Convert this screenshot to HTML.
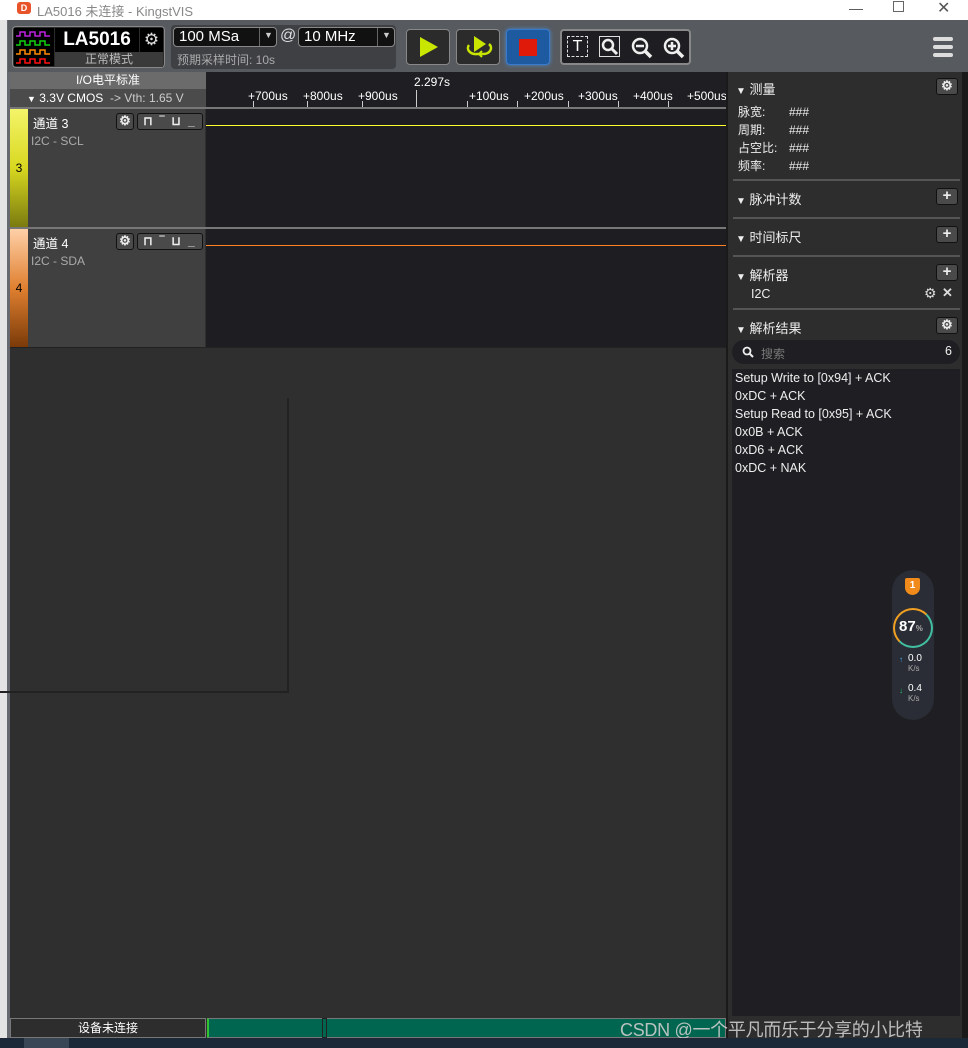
<!DOCTYPE html>
<html><head><meta charset="utf-8">
<style>
*{box-sizing:border-box;margin:0;padding:0}
body{width:968px;height:1048px;position:relative;overflow:hidden;background:#2f2f2f;font-family:"Liberation Sans","Noto Sans CJK SC",sans-serif;font-size:12px;color:#ddd}
.a{position:absolute}
.btn{position:absolute;border:1px solid #888;border-radius:4px;background:#2b2b2b}
.sbtn{position:absolute;width:22px;height:17px;border:1px solid #111;border-radius:3px;background:#4a4a4a;color:#eee;font-size:15px;line-height:14px;text-align:center;font-weight:bold}
.hdr{position:absolute;left:736px;color:#eee;font-size:13px}
.sep{position:absolute;left:733px;width:227px;height:2px;background:#555}
.res{position:absolute;left:735px;color:#eee;font-size:12.5px}
.tick{position:absolute;top:89px;color:#fff;font-size:12px}
.tk{position:absolute;top:101px;width:1px;height:6px;background:#ccc}
</style></head><body>
<div class="a" style="left:0;top:0;width:968px;height:20px;background:#fff"></div>
<div class="a" style="left:17px;top:2px;width:14px;height:12px;border-radius:3px;background:#e8532a;color:#fff;font-size:9px;font-weight:bold;text-align:center;line-height:12px">D</div>
<div class="a" style="left:37px;top:1px;color:#888;font-size:13px">LA5016 未连接 - KingstVIS</div>
<div class="a" style="left:849px;top:0px;color:#555;font-size:14px">—</div>
<div class="a" style="left:893px;top:1px;width:11px;height:11px;border:1px solid #666"></div>
<div class="a" style="left:937px;top:-2px;color:#555;font-size:16px">✕</div>
<div class="a" style="left:0;top:20px;width:8px;height:1018px;background:#e4e4e4"></div>
<div class="a" style="left:7px;top:20px;width:3px;height:1018px;background:#666a70"></div>
<div class="a" style="left:8px;top:20px;width:960px;height:52px;background:#575a5f"></div>
<div class="btn" style="left:12px;top:26px;width:153px;height:42px;background:#2b2b2b"></div>
<div class="a" style="left:14px;top:28px;width:40px;height:38px;background:#000"></div>
<svg class="a" style="left:14px;top:28px" width="40" height="38"><g fill="none" stroke-width="1.5">
<path d="M2 8h4v-4h5v4h5v-4h5v4h5v-4h5v4h5" stroke="#c020e0"/>
<path d="M2 17h4v-4h5v4h5v-4h5v4h5v-4h5v4h5" stroke="#10d010"/>
<path d="M2 26h4v-4h5v4h5v-4h5v4h5v-4h5v4h5" stroke="#ff8c00"/>
<path d="M2 35h4v-4h5v4h5v-4h5v4h5v-4h5v4h5" stroke="#ff1010"/></g></svg>
<div class="a" style="left:55px;top:28px;width:84px;height:24px;background:#000;color:#fff;font-size:19px;font-weight:bold;text-align:center;line-height:24px">LA5016</div>
<div class="a" style="left:140px;top:28px;width:23px;height:24px;background:#000;color:#ddd;font-size:17px;text-align:center;line-height:24px">⚙</div>
<div class="a" style="left:55px;top:52px;width:108px;height:15px;background:#3a3a3a;color:#bbb;font-size:12px;text-align:center;line-height:15px">正常模式</div>
<div class="a" style="left:171px;top:25px;width:225px;height:44px;background:#3e4044;border-radius:4px"></div>
<div class="btn" style="left:173px;top:27px;width:104px;height:20px;background:#111;color:#fff;font-size:15px;line-height:18px;padding-left:5px">100 MSa</div>
<div class="a" style="left:259px;top:28px;width:1px;height:18px;background:#666"></div>
<div class="a" style="left:264px;top:30px;color:#ccc;font-size:9px">▼</div>
<div class="a" style="left:280px;top:27px;color:#ddd;font-size:16px">@</div>
<div class="btn" style="left:298px;top:27px;width:97px;height:20px;background:#111;color:#fff;font-size:15px;line-height:18px;padding-left:5px">10 MHz</div>
<div class="a" style="left:377px;top:28px;width:1px;height:18px;background:#666"></div>
<div class="a" style="left:382px;top:30px;color:#ccc;font-size:9px">▼</div>
<div class="a" style="left:177px;top:51px;color:#aaa;font-size:12px">预期采样时间: 10s</div>
<div class="btn" style="left:406px;top:29px;width:44px;height:36px;background:#2b2b2b"></div>
<svg class="a" style="left:418px;top:36px" width="22" height="22"><path d="M2 1L20 11L2 21Z" fill="#c8e600"/></svg>
<div class="btn" style="left:456px;top:29px;width:44px;height:36px"></div>
<svg class="a" style="left:460px;top:32px" width="36" height="30"><path d="M14 4L26 12L14 20Z" fill="#c8e600"/><path d="M9 13a8 6 0 0 0 8 9h6a8 6 0 0 0 6-10" fill="none" stroke="#c8e600" stroke-width="2.5"/><path d="M22 19l-3 3 3 3" fill="none" stroke="#c8e600" stroke-width="2"/></svg>
<div class="btn" style="left:506px;top:29px;width:44px;height:36px;background:#1e5aa0;border-color:#3a7acc;box-shadow:0 0 4px #4a8ad0"></div>
<div class="a" style="left:519px;top:39px;width:18px;height:17px;background:#e01a0a"></div>
<div class="btn" style="left:560px;top:29px;width:131px;height:36px;background:#1e1e22;border-width:2px"></div>
<div class="a" style="left:567px;top:36px;width:21px;height:21px;border:1px dashed #ddd;color:#fff;font-size:16px;text-align:center;line-height:19px">T</div>
<div class="a" style="left:599px;top:36px;width:21px;height:21px;border:1px solid #ddd"></div>
<svg class="a" style="left:599px;top:36px" width="21" height="21"><circle cx="9" cy="9" r="5" fill="none" stroke="#eee" stroke-width="2.5"/><path d="M12 12l6 6" stroke="#eee" stroke-width="3"/></svg>
<svg class="a" style="left:630px;top:36px" width="24" height="24"><circle cx="10" cy="10" r="7" fill="none" stroke="#eee" stroke-width="2.5"/><path d="M6 10h8" stroke="#eee" stroke-width="2.5"/><path d="M15 15l6 6" stroke="#eee" stroke-width="3.5"/></svg>
<svg class="a" style="left:662px;top:36px" width="24" height="24"><circle cx="10" cy="10" r="7" fill="none" stroke="#eee" stroke-width="2.5"/><path d="M6 10h8M10 6v8" stroke="#eee" stroke-width="2.5"/><path d="M15 15l6 6" stroke="#eee" stroke-width="3.5"/></svg>
<div class="a" style="left:933px;top:37px;width:20px;height:4px;border-radius:2px;background:#ddd"></div>
<div class="a" style="left:933px;top:45px;width:20px;height:4px;border-radius:2px;background:#ddd"></div>
<div class="a" style="left:933px;top:53px;width:20px;height:4px;border-radius:2px;background:#ddd"></div>
<div class="a" style="left:10px;top:72px;width:716px;height:36px;background:#1f1f23"></div>
<div class="a" style="left:10px;top:72px;width:196px;height:17px;background:#6b6b6b;color:#fff;text-align:center;font-size:12px;line-height:17px">I/O电平标准</div>
<div class="a" style="left:10px;top:89px;width:196px;height:18px;background:#4b4b4b;color:#fff;font-size:12px;line-height:18px;padding-left:17px"><span style="font-size:9px">▼</span> 3.3V CMOS <span style="color:#ccc">&nbsp;-&gt; Vth: 1.65 V</span></div>
<div class="a" style="left:414px;top:75px;color:#fff;font-size:12px">2.297s</div>
<div class="a" style="left:416px;top:90px;width:1px;height:17px;background:#ccc"></div>
<div class="tick" style="left:248px">+700us</div><div class="tk" style="left:253px"></div>
<div class="tick" style="left:303px">+800us</div><div class="tk" style="left:307px"></div>
<div class="tick" style="left:358px">+900us</div><div class="tk" style="left:362px"></div>
<div class="tick" style="left:469px">+100us</div><div class="tk" style="left:467px"></div>
<div class="tick" style="left:524px">+200us</div><div class="tk" style="left:517px"></div>
<div class="tick" style="left:578px">+300us</div><div class="tk" style="left:568px"></div>
<div class="tick" style="left:633px">+400us</div><div class="tk" style="left:618px"></div>
<div class="tick" style="left:687px">+500us</div><div class="tk" style="left:668px"></div>
<div class="a" style="left:10px;top:107px;width:716px;height:2px;background:#777"></div>
<div class="a" style="left:10px;top:109px;width:18px;height:118px;background:linear-gradient(#f4f46a,#d8d820 50%,#7a7a10);color:#000;font-size:12px;text-align:center;line-height:118px">3</div>
<div class="a" style="left:28px;top:109px;width:177px;height:118px;background:#404040"></div>
<div class="a" style="left:206px;top:109px;width:520px;height:118px;background:#1e1e22"></div>
<div class="a" style="left:206px;top:125px;width:520px;height:1px;background:#ffff30"></div>
<div class="a" style="left:33px;top:113px;color:#fff;font-size:12.5px">通道 3</div>
<div class="a" style="left:31px;top:134px;color:#aaa;font-size:12px">I2C - SCL</div>
<div class="sbtn" style="left:116px;top:113px;width:18px;font-size:13px">⚙</div>
<div class="sbtn" style="left:137px;top:113px;width:66px;font-size:12px;letter-spacing:2px;line-height:15px">⊓ ‾ ⊔ _</div>
<div class="a" style="left:10px;top:227px;width:716px;height:2px;background:#777"></div>
<div class="a" style="left:10px;top:229px;width:18px;height:118px;background:linear-gradient(#ffd0a8,#e08030 50%,#7a3a08);color:#000;font-size:12px;text-align:center;line-height:118px">4</div>
<div class="a" style="left:28px;top:229px;width:177px;height:118px;background:#404040"></div>
<div class="a" style="left:206px;top:229px;width:520px;height:118px;background:#1e1e22"></div>
<div class="a" style="left:206px;top:245px;width:520px;height:1px;background:#ff8020"></div>
<div class="a" style="left:33px;top:233px;color:#fff;font-size:12.5px">通道 4</div>
<div class="a" style="left:31px;top:254px;color:#aaa;font-size:12px">I2C - SDA</div>
<div class="sbtn" style="left:116px;top:233px;width:18px;font-size:13px">⚙</div>
<div class="sbtn" style="left:137px;top:233px;width:66px;font-size:12px;letter-spacing:2px;line-height:15px">⊓ ‾ ⊔ _</div>
<div class="a" style="left:10px;top:347px;width:716px;height:1px;background:#222"></div>
<div class="a" style="left:287px;top:398px;width:2px;height:294px;background:#222"></div>
<div class="a" style="left:0;top:691px;width:289px;height:2px;background:#222"></div>
<div class="a" style="left:726px;top:72px;width:242px;height:966px;background:#2d2d2d;border-left:2px solid #1a1a1a;border-right:6px solid #1a1a1a"></div>
<div class="hdr" style="top:79px"><span style="font-size:10px">▼</span> 测量</div>
<div class="sbtn" style="left:936px;top:78px;font-size:13px">⚙</div>
<div class="a" style="left:738px;top:103px;color:#eee;font-size:12px;line-height:18px">脉宽:<br>周期:<br>占空比:<br>频率:</div>
<div class="a" style="left:789px;top:103px;color:#eee;font-size:12px;line-height:18px">###<br>###<br>###<br>###</div>
<div class="sep" style="top:179px"></div>
<div class="hdr" style="top:189px"><span style="font-size:10px">▼</span> 脉冲计数</div>
<div class="sbtn" style="left:936px;top:188px">+</div>
<div class="sep" style="top:217px"></div>
<div class="hdr" style="top:227px"><span style="font-size:10px">▼</span> 时间标尺</div>
<div class="sbtn" style="left:936px;top:226px">+</div>
<div class="sep" style="top:255px"></div>
<div class="hdr" style="top:265px"><span style="font-size:10px">▼</span> 解析器</div>
<div class="sbtn" style="left:936px;top:264px">+</div>
<div class="a" style="left:751px;top:287px;color:#eee;font-size:12.5px">I2C</div>
<div class="a" style="left:924px;top:285px;color:#ddd;font-size:14px">⚙</div>
<div class="a" style="left:942px;top:285px;color:#ddd;font-size:13px;font-weight:bold">✕</div>
<div class="sep" style="top:308px"></div>
<div class="hdr" style="top:318px"><span style="font-size:10px">▼</span> 解析结果</div>
<div class="sbtn" style="left:936px;top:317px;font-size:13px">⚙</div>
<div class="a" style="left:732px;top:340px;width:228px;height:24px;border-radius:12px;background:#1f1f23"></div>
<svg class="a" style="left:742px;top:346px" width="12" height="12"><circle cx="5" cy="5" r="3.5" fill="none" stroke="#eee" stroke-width="1.8"/><path d="M7.5 7.5l3.5 3.5" stroke="#eee" stroke-width="2"/></svg>
<div class="a" style="left:761px;top:345px;color:#777;font-size:12px">搜索</div>
<div class="a" style="left:945px;top:344px;color:#eee;font-size:12.5px">6</div>
<div class="a" style="left:732px;top:369px;width:228px;height:647px;background:#1f1f23"></div>
<div class="res" style="top:371px">Setup Write to [0x94] + ACK</div>
<div class="res" style="top:389px">0xDC + ACK</div>
<div class="res" style="top:407px">Setup Read to [0x95] + ACK</div>
<div class="res" style="top:425px">0x0B + ACK</div>
<div class="res" style="top:443px">0xD6 + ACK</div>
<div class="res" style="top:461px">0xDC + NAK</div>
<div class="a" style="left:892px;top:570px;width:42px;height:150px;border-radius:21px;background:#2a2d35"></div>
<div class="a" style="left:905px;top:578px;width:15px;height:17px;background:#f08a1a;border-radius:2px 2px 8px 8px;color:#fff;font-size:10px;font-weight:bold;text-align:center;line-height:16px">1</div>
<div class="a" style="left:893px;top:608px;width:40px;height:40px;border-radius:50%;border:2px solid;border-color:#f0a020 #40c0a0 #40c0a0 #f0a020"></div>
<div class="a" style="left:899px;top:618px;color:#fff;font-size:15px;font-weight:bold">87<span style="font-size:8px;color:#aaa">%</span></div>
<div class="a" style="left:899px;top:655px;color:#3ab0f0;font-size:8px">↑</div>
<div class="a" style="left:908px;top:654px;color:#fff;font-size:10px;line-height:10px">0.0<br><span style="color:#aaa;font-size:8px">K/s</span></div>
<div class="a" style="left:899px;top:686px;color:#20c070;font-size:8px">↓</div>
<div class="a" style="left:908px;top:684px;color:#fff;font-size:10px;line-height:10px">0.4<br><span style="color:#aaa;font-size:8px">K/s</span></div>
<div class="a" style="left:10px;top:1018px;width:196px;height:20px;background:#2d2d2d;border:1px solid #777;color:#fff;font-size:12px;text-align:center;line-height:18px">设备未连接</div>
<div class="a" style="left:207px;top:1018px;width:519px;height:20px;background:#006650;border:1px solid #777;border-left:2px solid #30c030"></div>
<div class="a" style="left:322px;top:1018px;width:5px;height:20px;border:1px solid #222"></div>
<div class="a" style="left:620px;top:1016px;color:#ccc;font-size:18px;letter-spacing:-0.3px;white-space:nowrap;opacity:.9">CSDN @一个平凡而乐于分享的小比特</div>
<div class="a" style="left:0;top:1038px;width:968px;height:10px;background:#1c2838"></div>
<div class="a" style="left:24px;top:1038px;width:45px;height:10px;background:#3a4656"></div>
</body></html>
